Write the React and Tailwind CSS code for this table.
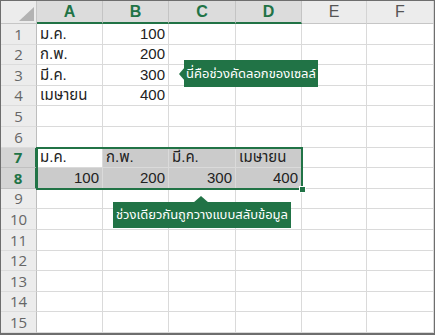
import React from 'react';

const cols = [
  { key: 'A', w: 'w-[66px]', sel: true },
  { key: 'B', w: 'w-[66px]', sel: true },
  { key: 'C', w: 'w-[67px]', sel: true },
  { key: 'D', w: 'w-[66px]', sel: true },
  { key: 'E', w: 'w-[65px]', sel: false },
  { key: 'F', w: 'w-[67px]', sel: false },
];

const rowHeights = ['h-[21px]', 'h-[20px]', 'h-[21px]', 'h-[20px]', 'h-[21px]', 'h-[21px]', 'h-[20px]', 'h-[21px]', 'h-[20px]', 'h-[21px]', 'h-[21px]', 'h-[20px]', 'h-[21px]', 'h-[20px]', 'h-[21px]'];

// cell values: [text, align]
const data = {
  1: { A: ['ม.ค.', 'l'], B: ['100', 'r'] },
  2: { A: ['ก.พ.', 'l'], B: ['200', 'r'] },
  3: { A: ['มี.ค.', 'l'], B: ['300', 'r'] },
  4: { A: ['เมษายน', 'l'], B: ['400', 'r'] },
  7: { A: ['ม.ค.', 'l'], B: ['ก.พ.', 'l'], C: ['มี.ค.', 'l'], D: ['เมษายน', 'l'] },
  8: { A: ['100', 'r'], B: ['200', 'r'], C: ['300', 'r'], D: ['400', 'r'] },
};

function Cell({ row, col }) {
  const value = data[row]?.[col.key];
  const inSel = (row === 7 || row === 8) && col.sel;
  const active = row === 7 && col.key === 'A';
  const bg = inSel && !active ? 'bg-[#cbcbcb]' : 'bg-white';
  return (
    <div
      className={`${col.w} shrink-0 border-r border-b border-[#dadada] ${bg} flex items-end whitespace-nowrap px-[3px] pb-[1px] text-[15px] leading-[18px] text-[#222] ${value?.[1] === 'r' ? 'justify-end' : 'justify-start'}`}
    >
      {value?.[0]}
    </div>
  );
}

export default function App() {
  const rows = Array.from({ length: 15 }, (_, i) => i + 1);

  return (
    <div
      className="relative w-[435px] h-[335px] overflow-hidden border border-b-2 border-[#6e6e6e] bg-white"
      style={{ fontFamily: '"Liberation Sans", "Noto Sans", "Noto Sans Thai", sans-serif' }}
    >
      {/* column headers */}
      <div className="flex h-[23px]">
        <div className="relative w-[36px] shrink-0 border-r border-b border-[#c6c6c6] bg-[#ececec]">
          <svg className="absolute right-[2px] bottom-[2px]" width="15" height="14" viewBox="0 0 15 14">
            <polygon points="15,0 15,14 0,14" fill="#b3b3b3" />
          </svg>
        </div>
        {cols.map((c) => (
          <div
            key={c.key}
            className={`${c.w} shrink-0 flex items-center justify-center border-r text-[16px] ${
              c.sel
                ? 'bg-[#dcdcdc] border-[#c4c4c4] border-b-2 border-b-[#217346] font-bold text-[#217346]'
                : 'bg-[#ececec] border-[#d4d4d4] border-b border-b-[#c6c6c6] text-[#555]'
            }`}
          >
            {c.key}
          </div>
        ))}
      </div>

      {rows.map((r, i) => {
        const hl = r === 7 || r === 8;
        return (
          <div key={r} className={`flex ${rowHeights[i]}`}>
            <div
              className={`w-[36px] shrink-0 flex items-center justify-center border-r border-b text-[15px] font-['Open_Sans',sans-serif] ${
                hl
                  ? 'bg-[#d4d4d4] border-r-[#217346] border-r-2 border-b-[#c0c0c0] font-bold text-[#217346]'
                  : 'bg-[#ececec] border-r-[#bdbdbd] border-b-[#dcdcdc] text-[#666]'
              }`}
            >
              {r}
            </div>
            {cols.map((c) => (
              <Cell key={c.key} row={r} col={c} />
            ))}
          </div>
        );
      })}

      {/* selection outline over A7:D8 */}
      <div className="pointer-events-none absolute left-[35px] top-[146px] h-[43px] w-[267px] border-2 border-[#217346]" />
      <div className="absolute left-[298px] top-[185px] h-[7px] w-[7px] border border-white bg-[#217346]" />

      {/* callout: copy range */}
      <div className="absolute left-[178px] top-[59px] flex items-center">
        <svg width="6" height="14" viewBox="0 0 6 14" className="-mr-px">
          <polygon points="6,0 0,7 6,14" fill="#217346" />
        </svg>
        <div className="flex h-[27px] w-[134px] items-center justify-center whitespace-nowrap bg-[#217346] text-[13px] text-white">
          นี่คือช่วงคัดลอกของเซลล์
        </div>
      </div>

      {/* callout: transposed range */}
      <div className="absolute left-[112px] top-[195px] flex flex-col">
        <svg width="16" height="7" viewBox="0 0 16 7" className="ml-[80px] -mb-px">
          <polygon points="0,7 8,0 16,7" fill="#217346" />
        </svg>
        <div className="flex h-[26px] w-[178px] items-center justify-center whitespace-nowrap bg-[#217346] text-[13px] text-white">
          ช่วงเดียวกันถูกวางแบบสลับข้อมูล
        </div>
      </div>
    </div>
  );
}
